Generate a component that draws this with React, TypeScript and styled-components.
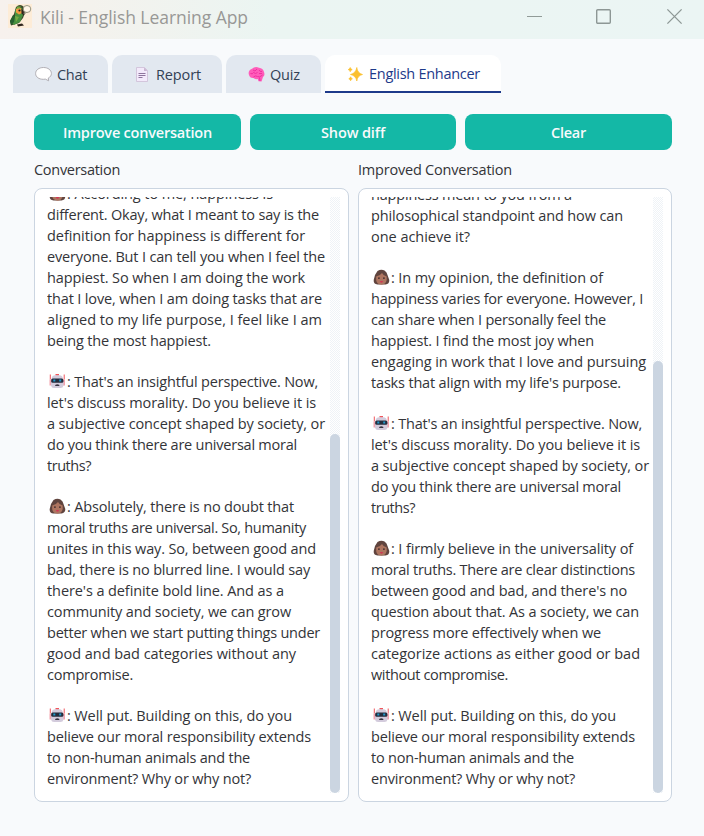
import React, { useLayoutEffect, useRef } from "react";
import styled, { createGlobalStyle } from "styled-components";

const GlobalStyle = createGlobalStyle`
  * { box-sizing: border-box; }
  body {
    margin: 0;
    background: #f8fafc;
    color: #333438;
    font-family: "Open Sans", "Noto Sans", sans-serif;
    font-size: 14.5px;
  }
`;

const Window = styled.div`
  width: 704px;
  height: 836px;
  display: flex;
  flex-direction: column;
  overflow: hidden;
  background: #f8fafc;
`;

const TitleBar = styled.header`
  height: 39px;
  flex: none;
  display: flex;
  align-items: flex-start;
  padding: 4px 22px 0 8px;
  background: linear-gradient(90deg, #f7f1ed 0, #f4f2ed 90px, #ebf5f2 270px, #ebf5f4 100%);
`;

const AppTitle = styled.h1`
  margin: 0 0 0 8px;
  flex: 1;
  color: #989896;
  font-size: 17.5px;
  font-weight: 400;
  line-height: 26px;
`;

const WindowControls = styled.div`
  display: flex;
  gap: 55px;
  padding-top: 4px;

  svg {
    overflow: visible;
  }
`;

const TabList = styled.nav`
  display: flex;
  gap: 4px;
  padding: 16px 13px 0;
`;

const Tab = styled.button<{ $width: number; $active?: boolean }>`
  width: ${(p) => p.$width}px;
  height: 38px;
  display: flex;
  align-items: center;
  padding: ${(p) => (p.$active ? 2 : 3)}px 0 0 22px;
  gap: 5px;
  border: 0;
  border-bottom: 2px solid ${(p) => (p.$active ? "#1e3a8a" : "#e2e8f0")};
  border-radius: 10px 10px 0 0;
  background: ${(p) => (p.$active ? "#ffffff" : "#e2e8f0")};
  color: ${(p) => (p.$active ? "#1e3a8a" : "#334155")};
  font: inherit;
  line-height: 20px;
`;

const Content = styled.main`
  display: flex;
  flex-direction: column;
  padding: 21px 32px 0 34px;
`;

const Actions = styled.div`
  display: grid;
  grid-template-columns: 207px 206px 207px;
  gap: 9px;
`;

const ActionButton = styled.button`
  height: 36px;
  display: flex;
  align-items: center;
  justify-content: center;
  padding: 2px 0 0;
  border: 0;
  border-radius: 8px;
  background: #14b8a6;
  color: #f8fafc;
  font: inherit;
  font-weight: 600;
  line-height: 20px;
`;

const Columns = styled.div`
  display: grid;
  grid-template-columns: 315px 314px;
  gap: 9px;
`;

const Heading = styled.h2`
  margin: 0;
  height: 38px;
  padding-top: 9px;
  font-size: 14.5px;
  font-weight: 400;
  line-height: 21px;
`;

const Pane = styled.div`
  height: 614px;
  display: flex;
  justify-content: space-between;
  padding: 8px 8px 8px 12px;
  border: 1px solid #cbd5e1;
  border-radius: 8px;
  background: #ffffff;
`;

const Transcript = styled.div`
  flex: 1;
  min-width: 0;
  height: 596px;
  display: flex;
  flex-direction: column;
  justify-content: flex-end;
  gap: 20px;
  padding-bottom: 4px;
  overflow: hidden;
`;

const Message = styled.div`
  display: flex;
  flex-direction: column;
`;

const Row = styled.div`
  height: 21px;
  display: flex;
  align-items: center;
  line-height: 21px;
`;

const Avatar = styled.span`
  width: 20px;
  height: 17px;
  flex: none;
  padding-left: 2px;
  display: block;
`;

const Track = styled.div`
  width: 10px;
  flex: none;
  display: flex;
  align-items: flex-end;
  background: repeating-conic-gradient(#eff3f7 0 25%, #ffffff 0 50%) 0 0 / 2px 2px;
`;

const Thumb = styled.div<{ $height: number }>`
  width: 10px;
  height: ${(p) => p.$height}px;
  border-radius: 5px;
  background: #cbd5e1;
`;

const TextRun = styled.span`
  white-space: pre;
`;

/* Text whose tracking is adjusted so that it spans the given width. */
function Fitted({ width, children }: { width: number; children: string }) {
  const ref = useRef<HTMLSpanElement>(null);
  useLayoutEffect(() => {
    const el = ref.current;
    if (!el) return;
    el.style.letterSpacing = "0px";
    const natural = el.getBoundingClientRect().width;
    el.style.letterSpacing = `${(width - natural) / children.length}px`;
  }, [width, children]);
  return <TextRun ref={ref}>{children}</TextRun>;
}

const Parrot = () => (
  <svg width="24" height="24" viewBox="0 0 24 24">
    <path fill="#fdecd7" d="M0 0h24v24H0z" />
    <path fill="#3c4a2a" d="M8 3q4-4 8 0l1.500 4.500L15 14l-4 5-8 2.500L2 17l4-7z" />
    <path fill="#47903f" d="M7 6q3-5 7-2l1 7-3 7-6 3-3-3 4-6z" />
    <path fill="#75a944" d="M9 2.500l4 0-3 3-2 2zM7 12l4 1-3 5z" />
    <path fill="#25602f" d="M5 11l2 1-1 6-3 3-1-4z" />
    <path fill="#f09a42" d="M8 5l5-1 1 5-3 1.500-3-2z" />
    <path fill="#30251d" d="M13.500 5l3.500 3-1 3.500-2.500-2zM9 20.500l5-1 2 2-6 1z" />
    <circle cx="11.500" cy="6.500" r="1.100" fill="#222" />
    <ellipse cx="19" cy="5" rx="3.800" ry="3.500" fill="#fff6e8" stroke="#8c8a76" strokeWidth=".9" />
    <path fill="none" stroke="#8c8a76" strokeWidth=".9" d="M16.500 7.500l-.5 2.500 2.500-1.500" />
  </svg>
);

const SpeechIcon = () => (
  <svg width="17" height="17" viewBox="0 0 17 17">
    <path fill="#fff" stroke="#aaa7ad" strokeWidth=".9" d="M8.500 1.500C4 1.500.6 4 .6 7.500s3.300 5.800 7.700 5.800l2.100-.2 3.200 1.700-.3-2.800c2.100-1 3.100-2.600 3.100-4.500 0-3.500-3.500-6-7.900-6z" />
  </svg>
);

const PageIcon = () => (
  <svg width="17" height="17" viewBox="0 0 17 17">
    <path fill="#f3eafb" stroke="#cdbcd6" strokeWidth=".8" d="M2.500 1.500h8l3 3v11h-11z" />
    <path fill="#c9b7d2" d="M10 1.500v3.500h3.500z" />
    <path stroke="#8e759d" strokeWidth="1.200" d="M4.500 7.500h7M4.500 9.500h7M4.500 11.500h4" />
  </svg>
);

const BrainIcon = () => (
  <svg width="17" height="17" viewBox="0 0 17 17">
    <path fill="#ff5cba" d="M1 9Q-.5 4.500 4 2.700 7 0 11 1.700q4 .5 5 4.300 1.300 3.500-1 5L13.500 15.500l-3-.2-.8-2.300Q7 13.500 5.500 12 2 12.500 1 9z" />
    <path fill="none" stroke="#ee2c9d" strokeWidth=".9" d="M2.500 7.500q2 1 3-1 2 2 4 0M5 4l2 1 2-2M11 4q1 2 3 1.500M5.500 11q2-2 4-.5t5-1.500M11.500 11.500l.5 3.500M11 7.500h3" />
  </svg>
);

const SparkleIcon = () => (
  <svg width="17" height="17" viewBox="0 0 17 17">
    <path fill="#fbc02f" d="M9.800 1.500Q10.500 7.300 15.500 8.500 10.500 9.600 9.800 15 8.800 9.600 3.500 8.500 8.800 7.300 9.800 1.500zM3.200 1.500q.4 1.700 2 2.100-1.600.4-2 2.100Q2.800 4 1.200 3.600q1.600-.4 2-2.100zM3.600 10.800q.3 1.600 1.800 2-1.500.4-1.800 2-.3-1.600-1.800-2 1.500-.4 1.800-2z" stroke="#fbc02f" strokeWidth=".7" />
  </svg>
);

const RobotIcon = () => (
  <svg width="17" height="17" viewBox="0 0 17 17">
    <path fill="#f0565c" d="M.8 1.500h1v5h-1zM14.700 1.500h1v5h-1z" />
    <path fill="#f3a3ae" d="M.5 6.500H3v6H.5zM13.500 6.500H16v6h-2.500z" />
    <path fill="#d3cbdc" d="M3 4q.8-2 5.300-2t5.200 2l1 4.500 0 4Q14 15 11.500 15H5q-2.500 0-3-2.500v-4z" />
    <path fill="#f0565c" d="M6.500 1h3.500v1.200H6.500z" />
    <rect x="2.200" y="5.500" width="12.200" height="4.300" rx="1.500" fill="#252c3c" />
    <path fill="#383541" d="M6 13q0-1.700 2.300-1.700t2.200 1.700z" />
    <path fill="#2199cb" d="M4.300 6.600h2v2h-2zM10.200 6.600h2v2h-2z" />
  </svg>
);

const WomanIcon = () => (
  <svg width="17" height="17" viewBox="0 0 17 17">
    <path fill="#60443e" d="M4.500 2Q8 0 11.500 1.500 14 3 14.500 6l1.800 5q.2 4-3.800 4.500h-8Q.3 15 .7 11L2 6z" />
    <path fill="#ae7560" d="M3.200 7.500Q7.500 6.500 9 4q1.500 3 4.700 3.500V11q-1 4.500-5.200 4.700-4.700-.5-5.300-4.500z" />
    <path fill="#3b292a" d="M5 8.500h1.800v1.200H5zM10 8.500h1.800v1.200H10z" />
    <path fill="#d23555" d="M6.800 12.300q1.800-.8 3.400 0-.5 1.400-1.700 1.400t-1.700-1.400z" />
  </svg>
);

type Line = [text: string, width: number];
interface Entry {
  speaker?: "robot" | "woman";
  lines: Line[];
}

const robotQuestion: Entry = {
  speaker: "robot",
  lines: [
    [": That's an insightful perspective. Now,", 251],
    ["let's discuss morality. Do you believe it is", 269],
    ["a subjective concept shaped by society, or", 278],
    ["do you think there are universal moral", 250],
    ["truths?", 44],
  ],
};

const closing: Entry = {
  speaker: "robot",
  lines: [
    [": Well put. Building on this, do you", 225],
    ["believe our moral responsibility extends", 264],
    ["to non-human animals and the", 203],
    ["environment? Why or why not?", 204],
  ],
};

const original: Entry[] = [
  {
    speaker: "woman",
    lines: [
      [": According to me, happiness is", 206],
      ["different. Okay, what I meant to say is the", 272],
      ["definition for happiness is different for", 258],
      ["everyone. But I can tell you when I feel the", 278],
      ["happiest. So when I am doing the work", 258],
      ["that I love, when I am doing tasks that are", 275],
      ["aligned to my life purpose, I feel like I am", 275],
      ["being the most happiest.", 164],
    ],
  },
  robotQuestion,
  {
    speaker: "woman",
    lines: [
      [": Absolutely, there is no doubt that", 227],
      ["moral truths are universal. So, humanity", 259],
      ["unites in this way. So, between good and", 269],
      ["bad, there is no blurred line. I would say", 263],
      ["there's a definite bold line. And as a", 237],
      ["community and society, we can grow", 244],
      ["better when we start putting things under", 273],
      ["good and bad categories without any", 249],
      ["compromise.", 86],
    ],
  },
  closing,
];

const improved: Entry[] = [
  {
    lines: [
      ["happiness mean to you from a", 201],
      ["philosophical standpoint and how can", 252],
      ["one achieve it?", 99],
    ],
  },
  {
    speaker: "woman",
    lines: [
      [": In my opinion, the definition of", 212],
      ["happiness varies for everyone. However, I", 272],
      ["can share when I personally feel the", 235],
      ["happiest. I find the most joy when", 223],
      ["engaging in work that I love and pursuing", 275],
      ["tasks that align with my life's purpose.", 250],
    ],
  },
  robotQuestion,
  {
    speaker: "woman",
    lines: [
      [": I firmly believe in the universality of", 242],
      ["moral truths. There are clear distinctions", 264],
      ["between good and bad, and there's no", 256],
      ["question about that. As a society, we can", 268],
      ["progress more effectively when we", 230],
      ["categorize actions as either good or bad", 269],
      ["without compromise.", 137],
    ],
  },
  closing,
];

function TranscriptPane({ entries, thumb }: { entries: Entry[]; thumb: number }) {
  return (
    <Pane>
      <Transcript>
        {entries.map((entry, i) => (
          <Message key={i}>
            {entry.lines.map(([text, width], j) => (
              <Row key={j}>
                {j === 0 && entry.speaker && (
                  <Avatar>{entry.speaker === "robot" ? <RobotIcon /> : <WomanIcon />}</Avatar>
                )}
                <Fitted width={width}>{text}</Fitted>
              </Row>
            ))}
          </Message>
        ))}
      </Transcript>
      <Track>
        <Thumb $height={thumb} />
      </Track>
    </Pane>
  );
}

export default function App() {
  return (
    <Window>
      <GlobalStyle />
      <TitleBar>
        <Parrot />
        <AppTitle>
          <Fitted width={208}>Kili - English Learning App</Fitted>
        </AppTitle>
        <WindowControls>
          <svg width="15" height="17" viewBox="0 0 15 17">
            <path d="M0 8.500h15" stroke="#919b98" />
          </svg>
          <svg width="15" height="17" viewBox="0 0 15 17">
            <rect x="-.3" y="1.700" width="13.600" height="13.600" rx="1" fill="none" stroke="#8d9795" strokeWidth="1.400" />
          </svg>
          <svg width="15" height="17" viewBox="0 0 15 17">
            <path d="M.4 1.400l14.200 14.200M14.600 1.400L.4 15.600" stroke="#8d9795" strokeWidth="1.300" />
          </svg>
        </WindowControls>
      </TitleBar>
      <TabList>
        <Tab $width={95}><SpeechIcon /><Fitted width={30}>Chat</Fitted></Tab>
        <Tab $width={110}><PageIcon /><Fitted width={45}>Report</Fitted></Tab>
        <Tab $width={95}><BrainIcon /><Fitted width={30}>Quiz</Fitted></Tab>
        <Tab $width={176} $active><SparkleIcon /><Fitted width={111}>English Enhancer</Fitted></Tab>
      </TabList>
      <Content>
        <Actions>
          <ActionButton><Fitted width={149}>Improve conversation</Fitted></ActionButton>
          <ActionButton><Fitted width={64}>Show diff</Fitted></ActionButton>
          <ActionButton><Fitted width={35}>Clear</Fitted></ActionButton>
        </Actions>
        <Columns>
          <section>
            <Heading><Fitted width={86}>Conversation</Fitted></Heading>
            <TranscriptPane entries={original} thumb={359} />
          </section>
          <section>
            <Heading><Fitted width={154}>Improved Conversation</Fitted></Heading>
            <TranscriptPane entries={improved} thumb={432} />
          </section>
        </Columns>
      </Content>
    </Window>
  );
}
